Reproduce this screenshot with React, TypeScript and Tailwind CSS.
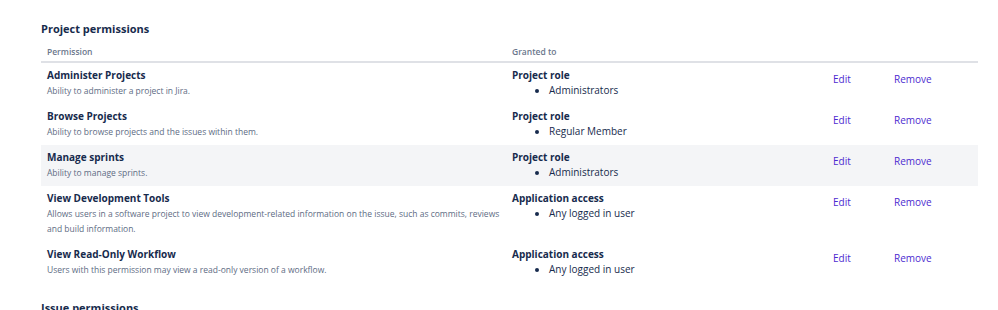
import React from "react";

type Row = {
  title: string;
  desc: string[];
  grantType: string;
  grantee: string;
  highlight?: boolean;
};

const rows: Row[] = [
  {
    title: "Administer Projects",
    desc: ["Ability to administer a project in Jira."],
    grantType: "Project role",
    grantee: "Administrators",
  },
  {
    title: "Browse Projects",
    desc: ["Ability to browse projects and the issues within them."],
    grantType: "Project role",
    grantee: "Regular Member",
  },
  {
    title: "Manage sprints",
    desc: ["Ability to manage sprints."],
    grantType: "Project role",
    grantee: "Administrators",
    highlight: true,
  },
  {
    title: "View Development Tools",
    desc: [
      "Allows users in a software project to view development-related information on the issue, such as commits, reviews",
      "and build information.",
    ],
    grantType: "Application access",
    grantee: "Any logged in user",
  },
  {
    title: "View Read-Only Workflow",
    desc: ["Users with this permission may view a read-only version of a workflow."],
    grantType: "Application access",
    grantee: "Any logged in user",
  },
];

export default function App() {
  return (
    <div
      className="w-[998px] h-[310px] overflow-hidden bg-white pl-[41px] pr-[20px] pt-[20px]"
      style={{ fontFamily: '"Open Sans", "Noto Sans", sans-serif' }}
    >
      <h2 className="text-[11px] leading-[18px] font-bold text-[#172b4d]">
        Project permissions
      </h2>
      <div className="w-[937px] mt-[3px]">
        <div className="grid grid-cols-[465px_321px_61px_90px] border-b-2 border-[#dfe1e6] h-[22px] pt-[2px] items-center text-[8.5px] font-semibold text-[#6b778c]">
          <div className="pl-[6px]">Permission</div>
          <div className="pl-[6px]">Granted to</div>
          <div />
          <div />
        </div>
        {rows.map((r) => (
          <div
            key={r.title}
            className={`grid grid-cols-[465px_321px_61px_90px] pt-[5px] pb-[6px] ${
              r.highlight ? "bg-[#f4f5f7]" : ""
            }`}
          >
            <div className="pl-[6px]">
              <div className="text-[10px] leading-[15px] font-bold text-[#172b4d]">
                {r.title}
              </div>
              {r.desc.map((d) => (
                <div key={d} className="text-[8.5px] leading-[15px] text-[#5e6c84]">
                  {d}
                </div>
              ))}
            </div>
            <div className="pl-[6px]">
              <div className="text-[10px] leading-[15px] font-bold text-[#172b4d]">
                {r.grantType}
              </div>
              <ul className="list-disc pl-[37px] text-[10px] leading-[15px] text-[#172b4d]">
                <li>{r.grantee}</li>
              </ul>
            </div>
            <div className="pl-[6px] pt-[3px] text-[10px] leading-[16px] text-[#4c2ad0]">
              Edit
            </div>
            <div className="pl-[6px] pt-[3px] text-[10px] leading-[16px] text-[#4c2ad0]">
              Remove
            </div>
          </div>
        ))}
      </div>
      <h2 className="mt-[16px] text-[11px] leading-[18px] font-bold text-[#172b4d]">
        Issue permissions
      </h2>
    </div>
  );
}
